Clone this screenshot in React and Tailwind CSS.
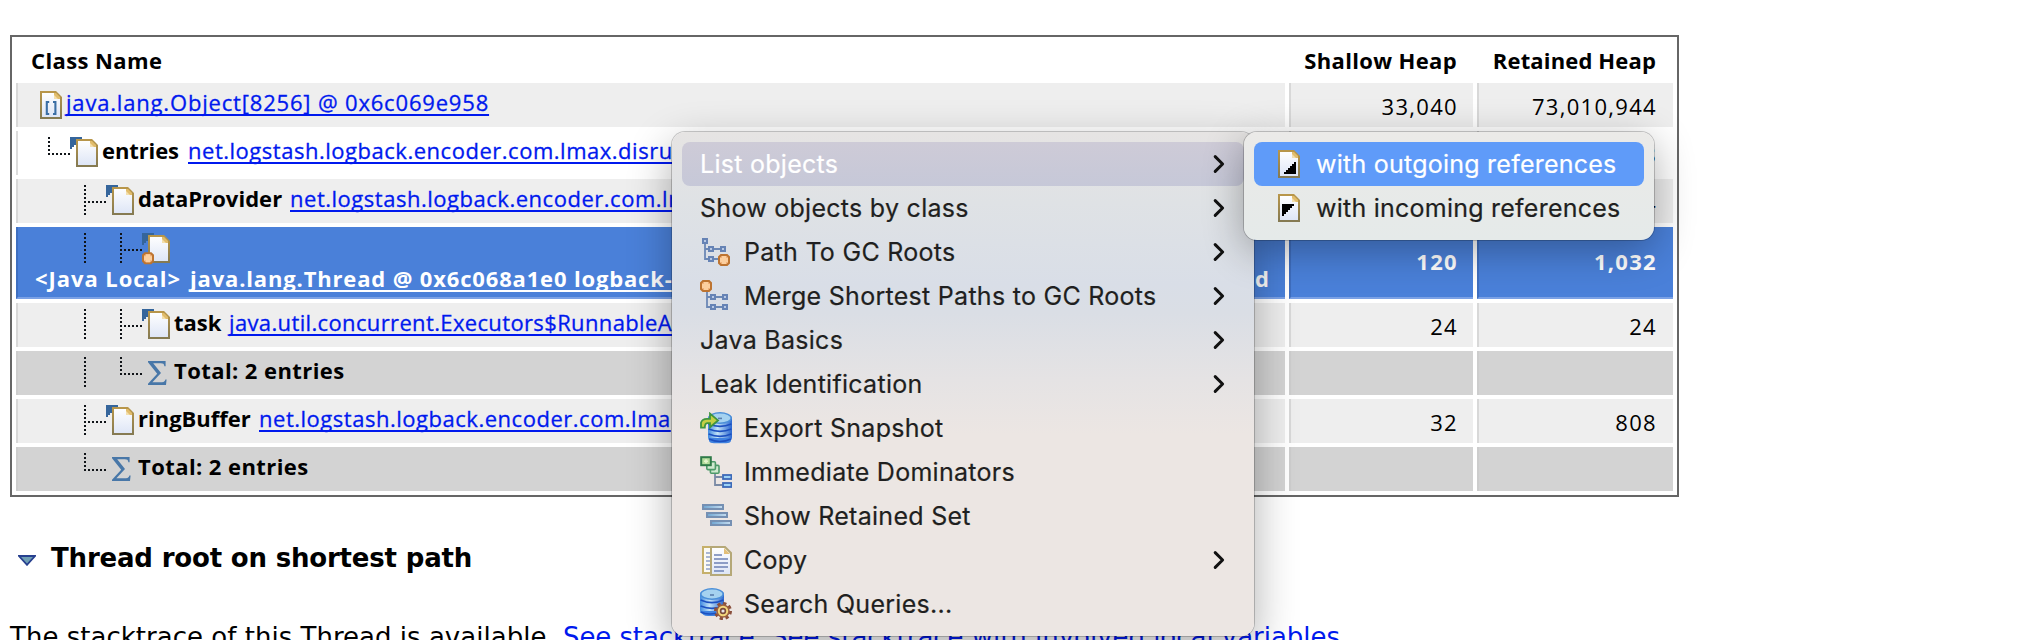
import React from "react";

const tableFont = "font-['Open_Sans','Noto_Sans',sans-serif] text-[22px]";
const link =
  "whitespace-pre text-[#0019ee] [-webkit-text-stroke:0.3px_#0019ee] underline decoration-[1.5px] underline-offset-[3px] [text-decoration-skip-ink:none]";

/* ---------- icons, drawn on a 16 unit grid and shown at 32px ---------- */

function Icon({ children, className = "" }) {
  return (
    <svg viewBox="0 0 16 16" className={"h-8 w-8 shrink-0 " + className}>
      {children}
    </svg>
  );
}

function Gradients() {
  return (
    <svg className="absolute h-0 w-0">
      <defs>
        <linearGradient id="page" x1="0" y1="0" x2="0" y2="1">
          <stop offset="0" stopColor="#ffffff" />
          <stop offset="1" stopColor="#dde5f6" />
        </linearGradient>
        <linearGradient id="edge" x1="0" y1="0" x2="0" y2="1">
          <stop offset="0" stopColor="#b8964a" />
          <stop offset="1" stopColor="#857a52" />
        </linearGradient>
        <linearGradient id="drum" x1="0" y1="0" x2="1" y2="0">
          <stop offset="0" stopColor="#3f8ae0" />
          <stop offset="0.4" stopColor="#c2e3f7" />
          <stop offset="1" stopColor="#2a66d0" />
        </linearGradient>
        <linearGradient id="bar" x1="0" y1="0" x2="1" y2="0">
          <stop offset="0" stopColor="#6fa6d2" />
          <stop offset="1" stopColor="#c6ddf0" />
        </linearGradient>
      </defs>
    </svg>
  );
}

function Page() {
  return (
    <g>
      <path d="M3.5 2.5H10.8L13.5 5.2V15.5H3.5Z" fill="url(#page)" stroke="url(#edge)" />
      <path d="M10 3V6H13V5L11 3Z" fill="#e2bd6c" />
      <path d="M10 4V6H12Z" fill="#f3dfae" />
    </g>
  );
}

const Corner = () => <path d="M0 1H6V2H5V3H4V4H3V5H2V6H1V7H0Z" fill="#35659b" />;

const GcDot = ({ x, y }) => (
  <g transform={`translate(${x} ${y})`}>
    <path d="M1.5 .5H4.5L5.5 1.5V4.5L4.5 5.5H1.5L.5 4.5V1.5Z" fill="#f2b27a" stroke="#bd7431" />
    <path d="M2 1H4V2H5V4H4V5H2V4H1V2H2Z" fill="#fccf9f" />
  </g>
);

const ArrayIcon = () => (
  <Icon>
    <Page />
    <path d="M7.6 7.5H6.4V13.5H7.6M9.5 7.5H10.7V13.5H9.5" fill="none" stroke="#3a6ea5" strokeWidth="1.05" />
  </Icon>
);

const FieldIcon = () => (
  <Icon>
    <Corner />
    <Page />
  </Icon>
);

const LocalIcon = () => (
  <Icon className="overflow-visible">
    <Corner />
    <Page />
    <GcDot x={0} y={10.6} />
  </Icon>
);

const SigmaIcon = () => (
  <Icon>
    <path
      d="M3 3H11.8V5.6H11.2C11 4.4 10.6 4.1 9.4 4.1H5.6L9.5 9L5.2 13.6H10C11.2 13.6 11.5 13 11.7 12.3H12.3L12 15H3V14.4L7.6 9.4L3 3.6Z"
      fill="#4877a8"
    />
  </Icon>
);

const OutIcon = () => (
  <Icon>
    <Page />
    <path d="M12 8V14H6V13H7V12H8V11H9V10H10V9H11V8Z" fill="#000" />
  </Icon>
);

const InIcon = () => (
  <Icon>
    <Page />
    <path d="M5 7H11V8H10V9H9V10H8V11H7V12H6V13H5Z" fill="#000" />
  </Icon>
);

const Node = ({ x, y }) => (
  <rect x={x + 0.5} y={y + 0.5} width="2" height="2" fill="#b9c9e4" stroke="#6683b5" />
);

const PathIcon = () => (
  <Icon>
    <path d="M2.5 2V11.5H10M2.5 6.5H11" fill="none" stroke="#6c88b5" strokeWidth="0.9" />
    <Node x={1} y={1} />
    <Node x={4} y={5} />
    <Node x={10} y={5} />
    <Node x={4} y={10} />
    <GcDot x={9} y={9} />
  </Icon>
);

const MergeIcon = () => (
  <Icon>
    <path d="M3.5 5V13.5H12M3.5 8.5H12" fill="none" stroke="#6c88b5" strokeWidth="0.9" />
    <GcDot x={0} y={0} />
    <Node x={5} y={7} />
    <Node x={11} y={7} />
    <Node x={5} y={12} />
    <Node x={11} y={12} />
  </Icon>
);

const ExportIcon = () => (
  <Icon>
    <rect x="4" y="1.5" width="12" height="13" rx="2" fill="url(#drum)" />
    <path d="M4.5 13V14.5Q5 15.6 7 15.6H13Q15 15.6 15.5 14.5V13Z" fill="#3f82e0" />
    <ellipse cx="10" cy="3" rx="5.6" ry="2.6" fill="#a5d2f0" stroke="#4b8fd8" strokeWidth="0.7" />
    <path d="M9 3.2H11" stroke="#5b7fae" strokeWidth="0.8" />
    <path
      d="M4.3 6Q10 8.4 15.7 6M4.3 8.5Q10 10.9 15.7 8.5M4.3 11Q10 13.4 15.7 11M4.5 13.5Q10 16 15.5 13.5"
      fill="none"
      stroke="#1c50c0"
      strokeWidth="0.8"
    />
    <path d="M.5 7.8V5.4Q1 3.4 3.5 3.4H5V.8L9 4.2L5 7.6V5.6H3.6Q2.4 5.8 2.4 7.8Z" fill="#c3d045" stroke="#3f9440" strokeWidth="0.9" />
  </Icon>
);

const DominatorIcon = () => (
  <Icon>
    <path d="M7.5 9V14.5H11M7.5 10.5H11" fill="none" stroke="#7a8aa5" strokeWidth="0.9" />
    <rect x="5.2" y="4.7" width="4.3" height="3.9" rx=".5" fill="#cfe9cf" stroke="#4d9a69" strokeWidth="0.8" />
    <rect x="3.4" y="2.9" width="4.3" height="3.9" rx=".5" fill="#cfe9cf" stroke="#4d9a69" strokeWidth="0.8" />
    <rect x=".6" y=".6" width="4.8" height="4" fill="#b4dd9c" stroke="#2f7a48" strokeWidth="1" />
    <path d="M2 2.6H4M3 1.6V3.6" stroke="#e6f5cf" strokeWidth="0.8" />
    <rect x="11.5" y="9.5" width="4.2" height="2" fill="#9cd2f5" stroke="#3c69b8" strokeWidth="0.9" />
    <rect x="11.5" y="13.5" width="4.2" height="2" fill="#9cd2f5" stroke="#3c69b8" strokeWidth="0.9" />
  </Icon>
);

const RetainedIcon = () => (
  <Icon>
    <rect x="1.5" y="2.5" width="10" height="2" fill="url(#bar)" stroke="#7590b3" />
    <rect x="3.5" y="6.5" width="10" height="2" fill="url(#bar)" stroke="#7590b3" />
    <rect x="5.5" y="10.5" width="10" height="2" fill="url(#bar)" stroke="#7590b3" />
  </Icon>
);

const CopyIcon = () => (
  <Icon>
    <path d="M1.5 1.5H9.5V14.5H1.5Z" fill="#fbfaf4" stroke="#c6b06a" />
    <path d="M3 4.5H5M3 6.5H5M3 8.5H5M3 10.5H5M3 12.5H5" stroke="#8fa0c8" strokeWidth="0.8" />
    <path d="M5.5 1.5H12.5L15.5 4.5V15.5H5.5Z" fill="url(#page)" stroke="#b5a878" />
    <path d="M12 2V5H15Z" fill="#e3bf78" />
    <path d="M7 5.5H11M7 7.5H14M7 9.5H14M7 11.5H14M7 13.5H12" stroke="#6d81b5" strokeWidth="0.8" />
  </Icon>
);

const QueryIcon = () => (
  <Icon>
    <rect x="0" y="1.5" width="12" height="11.5" rx="2" fill="url(#drum)" />
    <path d="M.5 11.5Q1 14 4 14H8V11.5Z" fill="#3f82e0" />
    <ellipse cx="6" cy="3" rx="5.6" ry="2.6" fill="#a5d2f0" stroke="#4b8fd8" strokeWidth="0.7" />
    <path d="M5 3.5H7" stroke="#5b7fae" strokeWidth="0.8" />
    <path d="M.3 6Q6 8.6 11.7 6M.3 9Q6 11.4 11.7 9M.3 12Q4 13.6 8 12.6" fill="none" stroke="#1c50c0" strokeWidth="0.8" />
    <circle cx="11.5" cy="11.5" r="3.7" fill="none" stroke="#8a4f3c" strokeWidth="1.6" strokeDasharray="1.6 1.3" />
    <circle cx="11.5" cy="11.5" r="3" fill="#f3d77c" stroke="#9c6040" strokeWidth="0.8" />
    <circle cx="11.5" cy="11.5" r="1.2" fill="#e9e4e6" stroke="#7a4a3c" strokeWidth="0.8" />
  </Icon>
);

/* ---------- tree guides ---------- */

function Guide({ kind }) {
  return (
    <svg viewBox="0 0 36 32" className="h-8 w-9 shrink-0">
      {kind !== "none" && (
        <path d={kind === "end" ? "M15 2V20" : "M15 2V32"} stroke="#101418" strokeWidth="2" strokeDasharray="2 2" />
      )}
      {(kind === "end" || kind === "tee") && (
        <path d="M18 19H36" stroke="#101418" strokeWidth="2" strokeDasharray="2 2" />
      )}
    </svg>
  );
}

/* ---------- table ---------- */

const bg = {
  odd: "bg-[#eeeeee] border-l-2 border-[#d8d8d8]",
  even: "bg-white border-l-2 border-[#dcdcdc]",
  total: "bg-[#d3d3d3] border-l-2 border-[#cdcdcd]",
  selected: "bg-[#4a80d9] border-l-2 border-b-2 border-l-[#3f6fc0] border-b-[#7ba1e5]",
};

function Row({ tone, guides = [], icon, children, shallow, retained, below }) {
  const num =
    tone === "selected"
      ? "text-right leading-[69px] font-bold text-white tracking-[1.3px]"
      : "text-right leading-[47px] tracking-[1.3px]";
  return (
    <>
      <div className={"overflow-hidden pl-4 " + bg[tone]}>
        <div className="flex">
          <div className="flex pt-1">
            {guides.map((g, i) => (
              <Guide key={i} kind={g} />
            ))}
            {icon}
          </div>
          {children && <div className="flex leading-[38px] whitespace-pre">{children}</div>}
        </div>
        {below}
      </div>
      <div className={num + " pr-[15px] " + bg[tone]}>{shallow}</div>
      <div className={num + " pr-[16px] " + bg[tone]}>{retained}</div>
    </>
  );
}

function HeapTable() {
  return (
    <div
      className={
        "grid h-[462px] w-[1669px] grid-cols-[1269px_184px_196px] grid-rows-[42px_repeat(3,44px)_72px_repeat(4,44px)] gap-1 overflow-hidden border-2 border-[#666666] px-1 text-black " +
        tableFont
      }
    >
      <div className="pl-[15px] leading-[47px] font-bold tracking-[0.4px]">Class Name</div>
      <div className="pr-[16px] text-right leading-[47px] font-bold tracking-[0.35px]">Shallow Heap</div>
      <div className="pr-[17px] text-right leading-[47px] font-bold tracking-[0.15px]">Retained Heap</div>

      <Row tone="odd" icon={<ArrayIcon />} shallow="33,040" retained="73,010,944">
        <span className={link + " tracking-[0.82px]"}>java.lang.Object[8256] @ 0x6c069e958</span>
      </Row>
      <Row tone="even" guides={["end"]} icon={<FieldIcon />} retained="8">
        <span className="w-[86px] font-bold tracking-[-0.1px]">entries</span>
        <span className={link + " tracking-[0.52px]"}>net.logstash.logback.encoder.com.lmax.disru</span>
      </Row>
      <Row tone="odd" guides={["none", "tee"]} icon={<FieldIcon />} retained="4">
        <span className="w-[152px] font-bold tracking-[0.05px]">dataProvider</span>
        <span className={link + " tracking-[0.52px]"}>net.logstash.logback.encoder.com.lm</span>
      </Row>
      <Row
        tone="selected"
        guides={["none", "line", "tee"]}
        icon={<LocalIcon />}
        shallow="120"
        retained="1,032"
        below={
          <div className="flex pr-4 pl-[1px] leading-[31px] font-bold whitespace-pre text-white">
            <span className="w-[155px] tracking-[0.95px]">&lt;Java Local&gt;</span>
            <span className="tracking-[0.84px] underline decoration-[1.5px] underline-offset-[3px] [text-decoration-skip-ink:none]">
              java.lang.Thread @ 0x6c068a1e0 logback-
            </span>
            <span className="ml-auto">d</span>
          </div>
        }
      />
      <Row tone="odd" guides={["none", "line", "tee"]} icon={<FieldIcon />} shallow="24" retained="24">
        <span className="w-[55px] font-bold">task</span>
        <span className={link + " tracking-[0.36px]"}>java.util.concurrent.Executors$RunnableA</span>
      </Row>
      <Row tone="total" guides={["none", "line", "end"]} icon={<SigmaIcon />}>
        <span className="font-bold tracking-[0.42px]">Total: 2 entries</span>
      </Row>
      <Row tone="odd" guides={["none", "tee"]} icon={<FieldIcon />} shallow="32" retained="808">
        <span className="w-[121px] font-bold">ringBuffer</span>
        <span className={link + " tracking-[0.52px]"}>net.logstash.logback.encoder.com.lma</span>
      </Row>
      <Row tone="total" guides={["none", "end"]} icon={<SigmaIcon />}>
        <span className="font-bold tracking-[0.42px]">Total: 2 entries</span>
      </Row>
    </div>
  );
}

/* ---------- menus ---------- */

const Chevron = () => (
  <svg viewBox="0 0 12 20" className="ml-auto h-5 w-3">
    <path d="M2.2 2.6L9.6 10L2.2 17.4" fill="none" stroke="#111" strokeWidth="3" strokeLinecap="round" strokeLinejoin="round" />
  </svg>
);

const menuItems = [
  { label: "List objects", sub: true, active: true },
  { label: "Show objects by class", sub: true },
  { label: "Path To GC Roots", icon: <PathIcon />, sub: true },
  { label: "Merge Shortest Paths to GC Roots", icon: <MergeIcon />, sub: true },
  { label: "Java Basics", sub: true },
  { label: "Leak Identification", sub: true },
  { label: "Export Snapshot", icon: <ExportIcon /> },
  { label: "Immediate Dominators", icon: <DominatorIcon /> },
  { label: "Show Retained Set", icon: <RetainedIcon /> },
  { label: "Copy", icon: <CopyIcon />, sub: true },
  { label: "Search Queries...", icon: <QueryIcon /> },
];

function ContextMenu() {
  return (
    <div className="absolute top-[132px] left-[672px] w-[582px] rounded-[13px] bg-[linear-gradient(to_bottom,#e6e4e3_0%,#dfe2e5_14%,#d9dee7_30%,#dadee5_36%,#e5e3e4_49%,#ece6e3_60%,#ece6e3_100%)] p-[10px] font-[Inter,sans-serif] text-[25px] tracking-[0.28px] text-[#1f1f20] shadow-[0_0_0_1px_rgba(0,0,0,0.2),0_14px_44px_rgba(0,0,0,0.32)] [-webkit-text-stroke:0.2px]">
      {menuItems.map((m) => (
        <div
          key={m.label}
          className={
            "flex h-11 items-center rounded-[8px] pr-[19px] pl-[18px] whitespace-nowrap " +
            (m.active ? "bg-[linear-gradient(to_bottom,#cecbd7,#c6c8d8)] text-white" : "")
          }
        >
          {m.icon && <span className="mr-[12px]">{m.icon}</span>}
          <span className="pt-[2px]">{m.label}</span>
          {m.sub && <Chevron />}
        </div>
      ))}
    </div>
  );
}

function SubMenu() {
  return (
    <div className="absolute top-[132px] left-[1244px] h-[108px] w-[410px] rounded-[13px] bg-[linear-gradient(to_bottom,#ebeae8,#e5eae9)] p-[10px] font-[Inter,sans-serif] text-[25px] tracking-[0.24px] text-[#1f1f20] shadow-[0_0_0_1px_rgba(0,0,0,0.2),0_10px_40px_rgba(0,0,0,0.32)] [-webkit-text-stroke:0.2px]">
      <div className="flex h-11 items-center gap-3 rounded-[8px] bg-[#5f9bf9] pl-[18px] text-white">
        <span className="-mt-1">
          <OutIcon />
        </span>
        <span className="pt-[2px]">with outgoing references</span>
      </div>
      <div className="flex h-11 items-center gap-3 pl-[18px]">
        <span className="-mt-1">
          <InIcon />
        </span>
        <span className="pt-[2px]">with incoming references</span>
      </div>
    </div>
  );
}

export default function App() {
  return (
    <div className="relative h-[640px] w-[2038px] overflow-hidden bg-white pt-[35px] pl-[10px]">
      <Gradients />
      <HeapTable />

      <div className="mt-[46px] flex h-[31px] items-center font-['DejaVu_Sans',sans-serif] text-[26px] font-bold text-black">
        <svg viewBox="0 0 18 11" className="mt-[3px] ml-2 h-[11px] w-[18px]">
          <path d="M1 1H17L9 9.8Z" fill="#6f9fb4" stroke="#27408f" strokeWidth="1.8" />
        </svg>
        <h2 className="ml-[15px] tracking-[-0.18px] whitespace-nowrap">Thread root on shortest path</h2>
      </div>

      <p className="mt-[46px] font-['DejaVu_Sans',sans-serif] text-[26px] leading-[34px] whitespace-pre text-black">
        <span className="tracking-[0.02px]">The stacktrace of this Thread is available. </span>
        <span className="tracking-[-0.1px] text-[#0019ee] underline underline-offset-4">See stacktrace</span>
        <span>{". "}</span>
        <span className="tracking-[-0.03px] text-[#0019ee] underline underline-offset-4">
          See stacktrace with involved local variables
        </span>
        .
      </p>

      <ContextMenu />
      <SubMenu />
    </div>
  );
}
